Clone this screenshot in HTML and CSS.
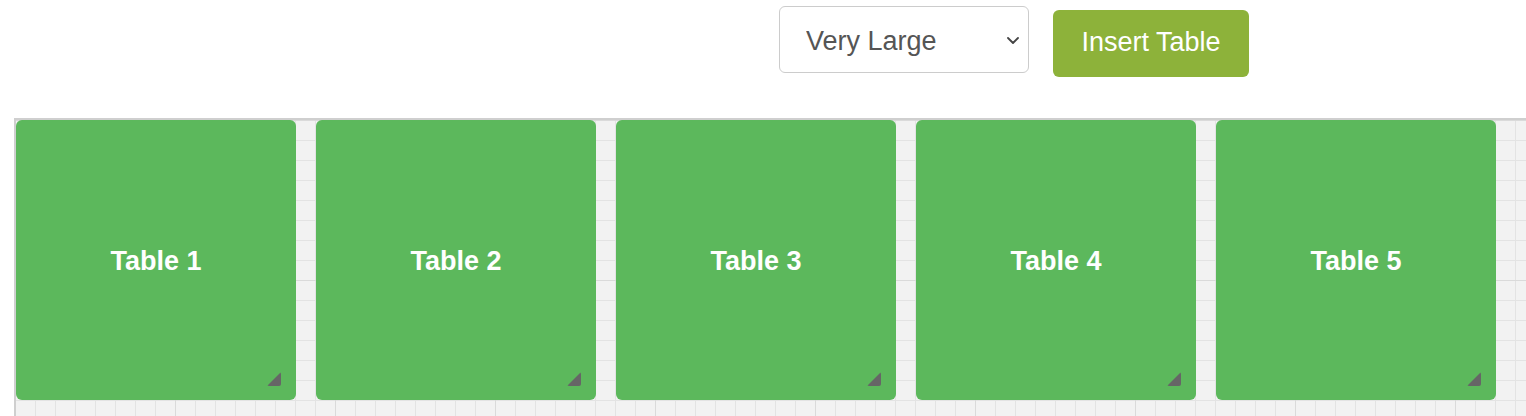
FILE: index.html
```html
<!DOCTYPE html>
<html lang="en">
<head>
    <meta charset="UTF-8">
    <meta name="viewport" content="width=device-width, initial-scale=1.0">
    <title>Table Layout</title>
    <link rel="stylesheet" href="styles.css">
</head>
<body>

    <!-- Toolbar -->
    <div class="toolbar">
        <div class="select-wrap">
            <select id="tableSize" class="size-select">
                <option>Small</option>
                <option>Medium</option>
                <option>Large</option>
                <option selected>Very Large</option>
            </select>
            <svg class="chevron" width="12" height="7" viewBox="0 0 12 7">
                <path d="M1 1 L6 6 L11 1" fill="none" stroke="#444" stroke-width="1.8" stroke-linecap="round" stroke-linejoin="round"/>
            </svg>
        </div>
        <button class="insert-btn">Insert Table</button>
    </div>

    <!-- Floor plan canvas -->
    <div class="canvas">
        <div class="table-box"><span>Table 1</span><i class="resize-handle"></i></div>
        <div class="table-box"><span>Table 2</span><i class="resize-handle"></i></div>
        <div class="table-box"><span>Table 3</span><i class="resize-handle"></i></div>
        <div class="table-box"><span>Table 4</span><i class="resize-handle"></i></div>
        <div class="table-box"><span>Table 5</span><i class="resize-handle"></i></div>
    </div>

</body>
</html>
```

FILE: styles.css
```css
/* General Styles */
body {
    font-family: "Liberation Sans", Arial, sans-serif;
    margin: 0;
    padding: 0;
    background-color: #fff;
    overflow: hidden;
}

/* Toolbar */
.toolbar {
    display: flex;
    align-items: flex-start;
    gap: 24px;
    padding-left: 779px;
    height: 118px;
}

.select-wrap {
    position: relative;
    margin-top: 6px;
}

.size-select {
    appearance: none;
    -webkit-appearance: none;
    width: 250px;
    height: 67px;
    padding: 2px 40px 0 26px;
    font-family: inherit;
    font-size: 27px;
    color: #555;
    background-color: #fff;
    border: 1px solid #ccc;
    border-radius: 6px;
    outline: none;
}

.chevron {
    position: absolute;
    right: 10px;
    top: 31px;
    pointer-events: none;
}

.insert-btn {
    margin-top: 10px;
    height: 67px;
    width: 196px;
    padding: 0 0 2px 0;
    font-family: inherit;
    font-size: 27px;
    color: #fff;
    background-color: #8db23a;
    border: none;
    border-radius: 6px;
    cursor: pointer;
}

/* Canvas */
.canvas {
    display: flex;
    gap: 20px;
    margin-left: 14px;
    height: 296px;
    border-top: 2px solid #cfcfcf;
    border-left: 2px solid #cfcfcf;
    background-color: #f2f2f2;
    background-image:
        linear-gradient(to right, #dadada 1px, transparent 1px),
        linear-gradient(to bottom, #dadada 1px, transparent 1px),
        linear-gradient(to right, #e3e3e3 1px, transparent 1px),
        linear-gradient(to bottom, #e3e3e3 1px, transparent 1px);
    background-size: 160px 160px, 160px 160px, 20px 20px, 20px 20px;
    background-position: 159px 0, 0 0, 19px 0, 0 0;
}

.table-box {
    position: relative;
    flex: 0 0 280px;
    height: 280px;
    display: flex;
    align-items: center;
    justify-content: center;
    background-color: #5cb85c;
    border-radius: 6px;
    color: #fff;
    font-size: 27px;
    font-weight: bold;
}

.table-box span {
    margin-top: 2px;
}

.resize-handle {
    position: absolute;
    right: 15px;
    bottom: 14px;
    width: 14px;
    height: 14px;
    background-color: #666;
    clip-path: polygon(100% 0, 100% 100%, 0 100%);
    border-radius: 2px;
}
```
